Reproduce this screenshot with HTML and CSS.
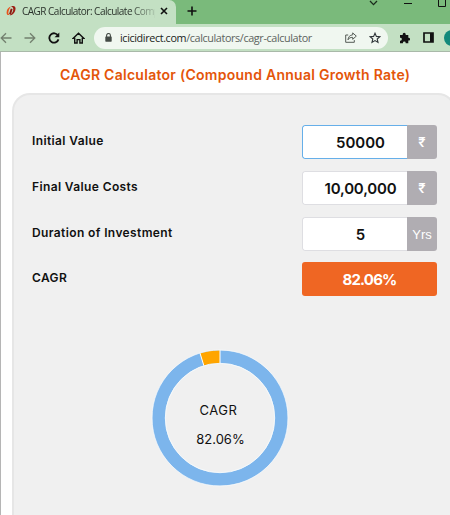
FILE: index.html
```html
<!DOCTYPE html>
<html lang="en">
<head>
    <meta charset="UTF-8">
    <meta name="viewport" content="width=device-width, initial-scale=1.0">
    <title>CAGR Calculator</title>
    <link rel="stylesheet" href="styles.css">
</head>
<body>

    <div class="tab-strip">
        <div class="tab">
            <svg class="favicon" width="12" height="12" viewBox="0 0 12 12">
                <path d="M6 1.6C3.6 2 1.8 4.4 1.6 7.2 1.5 9.6 2.8 10.6 4.4 9.8 3.2 9.2 3 7.8 3.8 5.6 4.4 3.8 5.2 2.4 6 1.6z" fill="#e8531c"/>
                <path d="M6 1.4C9 .2 11.2 1.4 10.4 4.8 9.7 8 7.4 10.4 4.6 10.4 7 8.9 8.2 6.6 8.3 4.6 8.4 2.8 7.6 1.8 6 1.4z" fill="#9c1c12"/>
                <path d="M6.7 3.8L5 9.4" stroke="#8a1a10" stroke-width="1.9"/>
            </svg>
            <span class="tab-title">CAGR Calculator: Calculate Comp</span>
            <svg class="tab-close" width="8" height="8" viewBox="0 0 8 8"><path d="M1 1l6 6M7 1L1 7" stroke="#111" stroke-width="1.6"/></svg>
        </div>
        <svg class="new-tab" width="10" height="10" viewBox="0 0 10 10"><path d="M5 .5v9M.5 5h9" stroke="#111" stroke-width="1.6"/></svg>
        <div class="window-controls">
            <svg width="9" height="6" viewBox="0 0 9 6"><path d="M1 1l3.5 3.6L8 1" fill="none" stroke="#1b2b1c" stroke-width="1.3"/></svg>
            <svg width="8" height="6" viewBox="0 0 8 6"><path d="M0 3.5h8" stroke="#111" stroke-width="1"/></svg>
            <svg width="8" height="7" viewBox="0 0 8 7"><path d="M.5 0v6.5h7V0" fill="none" stroke="#111"/></svg>
        </div>
    </div>

    <div class="toolbar">
        <svg class="nav back" width="12" height="12" viewBox="0 0 12 12"><path d="M11.5 6H1.2M6 1.2L1.2 6 6 10.8" fill="none" stroke="#73806f" stroke-width="1.3"/></svg>
        <svg class="nav forward" width="12" height="12" viewBox="0 0 12 12"><path d="M.5 6h10.3M6 1.2L10.8 6 6 10.8" fill="none" stroke="#73806f" stroke-width="1.3"/></svg>
        <svg class="nav reload" width="12" height="12" viewBox="0 0 12 12"><path d="M10.1 3.6A4.7 4.7 0 1 0 10.5 7.4" fill="none" stroke="#111" stroke-width="1.8"/><path d="M11.3.6v4.7H6.6z" fill="#111"/></svg>
        <svg class="nav home" width="13" height="12" viewBox="0 0 13 12"><path d="M1 6.4L6.5 1.2 12 6.4H10.3V11H7.9V7.6H5.1V11H2.7V6.4z" fill="none" stroke="#111" stroke-width="1.4"/></svg>
        <div class="address-bar">
            <svg class="lock" width="7" height="9" viewBox="0 0 7 9"><path d="M1.6 4V2.4a1.9 1.9 0 0 1 3.8 0V4" fill="none" stroke="#444b46" stroke-width="1.1"/><rect x=".3" y="3.5" width="6.4" height="5.2" rx=".6" fill="#444b46"/></svg>
            <span class="url"><b>icicidirect.com</b>/calculators/cagr-calculator</span>
            <svg class="share" width="12" height="11" viewBox="0 0 12 11"><path d="M3.2 3H.7v7.3h8.6V8.1" fill="none" stroke="#555c57" stroke-width="1"/><path d="M7.7.9l3.6 3.2-3.6 3.2V5.4C5.3 5.3 4 6.1 3 7.8 3.2 5 4.8 3.1 7.7 2.8z" fill="none" stroke="#555c57" stroke-width="1"/></svg>
            <svg class="star" width="12" height="12" viewBox="0 0 12 12"><path d="M6 1.2l1.4 3.2 3.5.3-2.7 2.3.8 3.4L6 8.6l-3 1.8.8-3.4L1.1 4.7l3.5-.3z" fill="none" stroke="#30363a" stroke-width="1.1"/></svg>
        </div>
        <svg class="puzzle" width="11" height="12" viewBox="0 0 11 12"><path d="M1 3h2.7V2.2a1.5 1.5 0 0 1 3 0V3H9.3v2.7h.3a1.4 1.4 0 0 1 0 2.9h-.3v2.7H6.7v-.4a1.4 1.4 0 0 0-2.8 0v.4H1V8.7h.4a1.4 1.4 0 0 0 0-2.9H1z" fill="#111"/></svg>
        <svg class="side-panel" width="11" height="11" viewBox="0 0 11 11"><path d="M1 1h9v9H1z" fill="none" stroke="#111" stroke-width="1.7"/><path d="M7 1h3v9H7z" fill="#111"/></svg>
        <span class="avatar"></span>
    </div>

    <main class="page">
        <h1>CAGR Calculator (Compound Annual Growth Rate)</h1>

        <section class="calculator">
            <div class="row">
                <label>Initial Value</label>
                <div class="field active"><span class="value">50000</span><span class="unit">₹</span></div>
            </div>
            <div class="row">
                <label>Final Value Costs</label>
                <div class="field"><span class="value value-long">10,00,000</span><span class="unit">₹</span></div>
            </div>
            <div class="row">
                <label>Duration of Investment</label>
                <div class="field"><span class="value">5</span><span class="unit unit-text">Yrs</span></div>
            </div>
            <div class="row">
                <label>CAGR</label>
                <div class="result">82.06%</div>
            </div>

            <div class="chart">
                <svg width="138" height="138" viewBox="0 0 138 138">
                    <circle cx="69" cy="69" r="61.3" fill="none" stroke="#7cb5ec" stroke-width="13"/>
                    <circle cx="69" cy="69" r="61.3" fill="none" stroke="#ffa500" stroke-width="13" pathLength="100" stroke-dasharray="4.76 95.24" transform="rotate(-107.1 69 69)"/>
                    <path d="M69 .8v13.6M48.9 3.8l4 13" stroke="#fff" stroke-width="1"/>
                    <circle cx="69" cy="69" r="68" fill="none" stroke="#f6fafd" stroke-width=".7"/>
                    <circle cx="69" cy="69" r="54.7" fill="none" stroke="#f6fafd" stroke-width=".9"/>
                </svg>
                <div class="chart-label">
                    <span class="chart-name">CAGR</span>
                    <span class="chart-value">82.06%</span>
                </div>
            </div>
        </section>
    </main>

</body>
</html>
```

FILE: styles.css
```css
* {
    box-sizing: border-box;
}

body {
    margin: 0;
    height: 515px;
    overflow: hidden;
    font-family: Inter, "Liberation Sans", sans-serif;
    background: #fff;
    color: #111;
    display: flex;
    flex-direction: column;
}

svg {
    display: block;
    flex: none;
}

.tab-strip {
    height: 24px;
    flex: none;
    display: flex;
    background: #7aba7b;
}

.tab {
    width: 176px;
    height: 24px;
    padding: 0 9px 2px 5px;
    display: flex;
    align-items: center;
    background: #c3e0c3;
    border-top-right-radius: 7px;
}

.tab-title {
    width: 133px;
    margin-left: 5px;
    white-space: nowrap;
    font-family: "Open Sans", sans-serif;
    font-size: 10px;
    letter-spacing: -0.52px;
    color: #2b332c;
    mask-image: linear-gradient(to right, #000 108px, transparent 138px);
}

.tab-close {
    margin-left: 5px;
}

.new-tab {
    margin: 6px 0 0 11px;
}

.window-controls {
    display: flex;
    gap: 26px;
    margin-left: auto;
    padding-right: 4px;
}

.toolbar {
    height: 28px;
    flex: none;
    display: flex;
    align-items: center;
    background: #c3e0c3;
    border-bottom: 1px solid #a9b9a9;
}

.forward {
    margin-left: 12px;
}

.reload {
    margin-left: 12px;
}

.home {
    margin-left: 12px;
}

.address-bar {
    width: 294px;
    flex: none;
    height: 22px;
    margin-left: 9px;
    padding: 0 7px 0 11px;
    display: flex;
    align-items: center;
    background: #f0f7f0;
    border-radius: 11px;
}

.url {
    margin-left: 8px;
    font-family: "Open Sans", sans-serif;
    font-size: 10.8px;
    letter-spacing: -0.38px;
    white-space: nowrap;
    color: #5c635e;
}

.url b {
    font-weight: 400;
    color: #202421;
}

.share {
    margin-left: auto;
}

.star {
    margin-left: 12px;
}

.puzzle {
    margin-left: 11px;
}

.side-panel {
    margin-left: 13px;
}

.avatar {
    width: 16px;
    height: 16px;
    flex: none;
    margin-left: 10px;
    border-radius: 50%;
    background: #12897b;
}

.page {
    flex: 1;
    display: flex;
    flex-direction: column;
    border-left: 1px solid #b5b5b5;
}

h1 {
    margin: 13px 0 9px 59px;
    font-size: 14px;
    line-height: 19px;
    font-weight: 600;
    letter-spacing: 0.27px;
    white-space: nowrap;
    color: #e45509;
}

.calculator {
    flex: 1;
    width: 444px;
    margin-left: 11px;
    padding: 30px 0 0 18px;
    background: #f0f0f0;
    border: 2px solid #e6e6e6;
    border-bottom: none;
    border-radius: 18px 18px 0 0;
}

.row {
    width: 405px;
    height: 34px;
    margin-bottom: 11.75px;
    display: flex;
    justify-content: space-between;
    align-items: center;
}

label {
    padding-bottom: 3px;
    font-size: 12px;
    font-weight: 600;
    letter-spacing: 0.38px;
    white-space: nowrap;
}

.field {
    width: 135px;
    height: 34px;
    display: flex;
    border-radius: 3px;
    overflow: hidden;
}

.value {
    flex: 1;
    padding-left: 11px;
    background: #fff;
    border: 1px solid #dedee2;
    border-right: none;
    border-radius: 3px 0 0 3px;
    font-size: 15px;
    font-weight: 600;
    line-height: 33px;
    text-align: center;
}

.value-long {
    letter-spacing: -0.2px;
}

.active .value {
    border-color: #66afe9;
}

.unit {
    width: 30px;
    background: #b0adb2;
    color: #fff;
    font-size: 13px;
    font-weight: 600;
    line-height: 34px;
    text-align: center;
}

.unit-text {
    font-family: "Liberation Sans", sans-serif;
    font-size: 13px;
    font-weight: 400;
    line-height: 35px;
}

.result {
    width: 135px;
    height: 34px;
    background: #ef6623;
    border-radius: 3px;
    color: #fff;
    font-size: 15px;
    font-weight: 700;
    letter-spacing: -0.8px;
    line-height: 35px;
    text-align: center;
}

.chart {
    position: relative;
    width: 138px;
    height: 138px;
    margin: 53px 0 0 119px;
}

.chart-label {
    position: absolute;
    inset: 0;
    display: flex;
    flex-direction: column;
    align-items: center;
    padding-top: 52px;
    font-size: 13px;
    line-height: 18px;
}

.chart-name {
    margin-right: 3px;
    letter-spacing: 0.5px;
}

.chart-value {
    margin-top: 11px;
    margin-left: 1px;
}
```
